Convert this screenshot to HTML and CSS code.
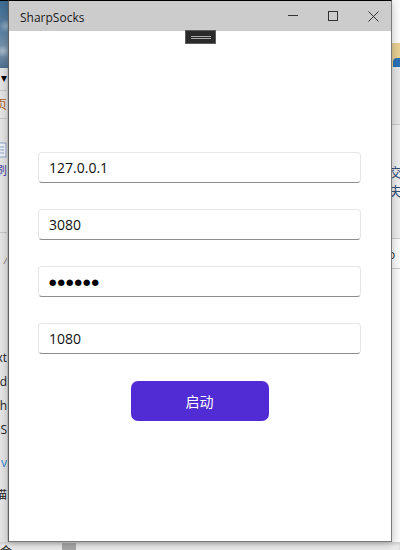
FILE: index.html
```html
<!DOCTYPE html>
<html lang="zh">
<head>
<meta charset="utf-8">
<title>SharpSocks</title>
<link rel="stylesheet" href="styles.css">
</head>
<body>
<div class="desktop">
  <div class="main-row">
    <div class="strip strip-left">
      <div class="sky"></div>
      <div class="panel-left">
        <span class="frag frag-arrow">▾</span>
        <span class="frag frag-orange">页</span>
        <span class="frag frag-doc"><svg width="14" height="16" viewBox="0 0 14 16"><rect x="1" y="1" width="12" height="14" fill="#eef2f8" stroke="#8ea3c2"/><path d="M3 5h8M3 8h8M3 11h8" stroke="#8ea3c2"/></svg></span>
        <span class="frag frag-purple">刷</span>
        <span class="frag frag-slash">⁄</span>
        <span class="frag">xt</span>
        <span class="frag">d</span>
        <span class="frag">sh</span>
        <span class="frag">oS</span>
        <span class="frag frag-blue">v</span>
        <span class="frag">描</span>
      </div>
    </div>

    <div class="window">
      <div class="titlebar">
        <span class="title">SharpSocks</span>
        <div class="caption-buttons">
          <span class="cap-btn"><svg width="10" height="10" viewBox="0 0 10 10"><path d="M0 4.5h10" stroke="#333" stroke-width="1"/></svg></span>
          <span class="cap-btn"><svg width="10" height="10" viewBox="0 0 10 10"><rect x="0.5" y="0.5" width="9" height="9" fill="none" stroke="#333" stroke-width="1"/></svg></span>
          <span class="cap-btn"><svg width="11" height="11" viewBox="0 0 11 11"><path d="M0.5 0.5L10.5 10.5M10.5 0.5L0.5 10.5" stroke="#333" stroke-width="1"/></svg></span>
        </div>
      </div>
      <div class="handle"><span class="handle-line"></span><span class="handle-line"></span></div>
      <div class="content">
        <form class="form">
          <input class="field" type="text" value="127.0.0.1">
          <input class="field" type="text" value="3080">
          <input class="field field-password" type="text" value="●●●●●●">
          <input class="field" type="text" value="1080">
          <button class="start-btn" type="button">启动</button>
        </form>
      </div>
    </div>

    <div class="strip strip-right">
      <div class="r-white"></div>
      <div class="r-tan"><span class="r-icon"></span></div>
      <div class="r-gray"></div>
      <div class="r-mid">
        <span class="rfrag">交</span>
        <span class="rfrag">夫</span>
      </div>
      <div class="r-low">
        <span class="rfrag rfrag-o">o</span>
      </div>
    </div>
  </div>
  <div class="bottom-row">
    <span class="b-char">会</span>
    <span class="b-block"></span>
  </div>
</div>
</body>
</html>
```

FILE: styles.css
```css
* { box-sizing: border-box; }

html, body {
  margin: 0;
  padding: 0;
  width: 400px;
  height: 550px;
  overflow: hidden;
  font-family: "Open Sans", "Noto Sans", "Noto Sans CJK SC", sans-serif;
  background: #e9e9e9;
}

.desktop {
  display: flex;
  flex-direction: column;
  width: 400px;
  height: 550px;
}

.main-row {
  display: flex;
  height: 542px;
}

/* ---------- desktop strips ---------- */
.strip {
  width: 8px;
  flex: none;
  display: flex;
  flex-direction: column;
  overflow: hidden;
}

.sky {
  height: 68px;
  flex: none;
  border-top: 1px solid #000;
  background:
    radial-gradient(circle at 3px 50px, #a9bccb 0, rgba(169,188,203,0) 6px),
    radial-gradient(circle at 6px 25px, #8fa9bf 0, rgba(143,169,191,0) 7px),
    linear-gradient(#3e6b92, #5c81a3 45%, #7d97ad 75%, #4d6f8e);
}

.panel-left {
  flex: 1;
  background-color: #e4e4e4;
  background-image:
    linear-gradient(#c6c6c6, #c6c6c6),
    linear-gradient(#c6c6c6, #c6c6c6),
    linear-gradient(#c6c6c6, #c6c6c6);
  background-size: 100% 1px;
  background-repeat: no-repeat;
  background-position: 0 22px, 0 50px, 0 164px;
  display: grid;
  grid-template-rows: 4px 12px 14px 14px 30px 16px 6px 14px 76px 12px 86px 12px 12px 12px 12px 12px 12px 12px 20px 14px 18px 14px 1fr;
  font-size: 12px;
  color: #222;
  border-right: 1px solid #cfcfcf;
}

.frag {
  display: flex;
  justify-content: flex-end;
  white-space: nowrap;
  line-height: 12px;
  height: 12px;
  align-self: center;
  overflow: hidden;
}
.panel-left .frag:nth-child(1) { grid-row: 2; }
.panel-left .frag:nth-child(2) { grid-row: 4; }
.panel-left .frag:nth-child(3) { grid-row: 6; height: 16px; }
.panel-left .frag:nth-child(4) { grid-row: 8; }
.panel-left .frag:nth-child(5) { grid-row: 10; }
.panel-left .frag:nth-child(6) { grid-row: 12; }
.panel-left .frag:nth-child(7) { grid-row: 14; }
.panel-left .frag:nth-child(8) { grid-row: 16; }
.panel-left .frag:nth-child(9) { grid-row: 18; }
.panel-left .frag:nth-child(10) { grid-row: 20; }
.panel-left .frag:nth-child(11) { grid-row: 22; }

.frag-arrow { font-size: 12px; color: #000; }
.frag-orange { color: #b0621a; }
.frag-doc svg { display: block; flex: none; }
.frag-purple { color: #4b3fa0; }
.frag-slash { color: #777; }
.frag-blue { color: #2f86d6; }

.strip-right {
  background: #fafafa;
  box-shadow: inset 1px 0 0 #bdbdbd;
}
.r-white { height: 43px; flex: none; background: #fbfbfb; }
.r-tan {
  height: 24px;
  flex: none;
  background: #e6cf92;
  position: relative;
}
.r-icon {
  position: absolute;
  left: 1px;
  top: 15px;
  width: 8px;
  height: 9px;
  background: #2c6fb6;
  border-radius: 4px 0 0 0;
}
.r-gray {
  height: 58px;
  flex: none;
  background: #e5e5e5;
  border-bottom: 1px solid #c8c8c8;
}
.r-mid {
  height: 114px;
  flex: none;
  background: #ececec;
  border-bottom: 1px solid #c8c8c8;
  display: flex;
  flex-direction: column;
  padding-top: 40px;
  gap: 4px;
}
.r-low {
  flex: 1;
  background: #fafafa;
  padding-top: 8px;
}
.rfrag {
  display: block;
  font-size: 13px;
  line-height: 15px;
  color: #34507a;
  white-space: nowrap;
  margin-left: -3px;
}
.rfrag-o {
  color: #333;
  font-size: 12px;
  margin-left: -4px;
  border-bottom: 1px solid #c8c8c8;
  padding-bottom: 6px;
}

.bottom-row {
  height: 8px;
  flex: none;
  display: flex;
  background: #ececec;
  box-shadow: inset 0 2px 3px rgba(0,0,0,0.12);
  overflow: hidden;
}
.b-char {
  font-size: 12px;
  line-height: 12px;
  margin-top: 3px;
  color: #222;
  font-family: "Noto Sans CJK SC", sans-serif;
}
.b-block {
  width: 14px;
  margin-left: 50px;
  margin-top: 1px;
  background: #a9a9a9;
}

/* ---------- window ---------- */
.window {
  width: 384px;
  flex: none;
  height: 542px;
  position: relative;
  display: flex;
  flex-direction: column;
  background: #fff;
  border-top: 1px solid #000;
  border-left: 1px solid #5f5f5f;
  border-right: 1px solid #7a7a7a;
  border-bottom: 1px solid #7a7a7a;
  box-shadow: 0 2px 8px rgba(0,0,0,0.25);
  z-index: 1;
}

.titlebar {
  height: 30px;
  flex: none;
  background: #cccccc;
  display: flex;
  align-items: center;
  justify-content: space-between;
}
.title {
  font-family: "Open Sans", "Noto Sans", sans-serif;
  font-size: 12px;
  color: #1b1b1b;
  padding-left: 11px;
  margin-top: 2px;
}
.caption-buttons {
  display: flex;
  height: 30px;
  margin-right: -2px;
}
.cap-btn {
  width: 40px;
  height: 30px;
  display: flex;
  align-items: center;
  justify-content: center;
}
.cap-btn svg { display: block; }

.handle {
  position: absolute;
  top: 29px;
  left: 176px;
  width: 31px;
  height: 14px;
  background: #2a2a2a;
  border: 1px solid #5c5c5c;
  display: flex;
  flex-direction: column;
  justify-content: center;
  align-items: center;
  gap: 1px;
  z-index: 2;
}
.handle-line {
  width: 20px;
  height: 1px;
  background: #a8a8a8;
}

.content {
  flex: 1;
  padding: 121px 30px 0 29px;
}

.form {
  display: flex;
  flex-direction: column;
  gap: 26px;
  margin: 0;
}

.field {
  display: block;
  width: 100%;
  height: 31px;
  margin: 0;
  padding: 0 10px;
  font-family: "Open Sans", "Noto Sans", sans-serif;
  font-size: 14px;
  color: #111;
  background: #fff;
  border: 1px solid #e6e6e6;
  border-bottom: 1px solid #8c8c8c;
  border-radius: 4px;
  outline: none;
  appearance: none;
}
.field-password {
  font-family: "DejaVu Sans", sans-serif;
  font-size: 8.5px;
  letter-spacing: 1.1px;
  color: #000;
}

.start-btn {
  align-self: center;
  width: 138px;
  height: 40px;
  margin-top: 1px;
  border: none;
  border-radius: 7px;
  background: #512bd4;
  color: #fff;
  font-family: "Noto Sans CJK SC", "Noto Sans", sans-serif;
  font-size: 14px;
  cursor: pointer;
}
```
